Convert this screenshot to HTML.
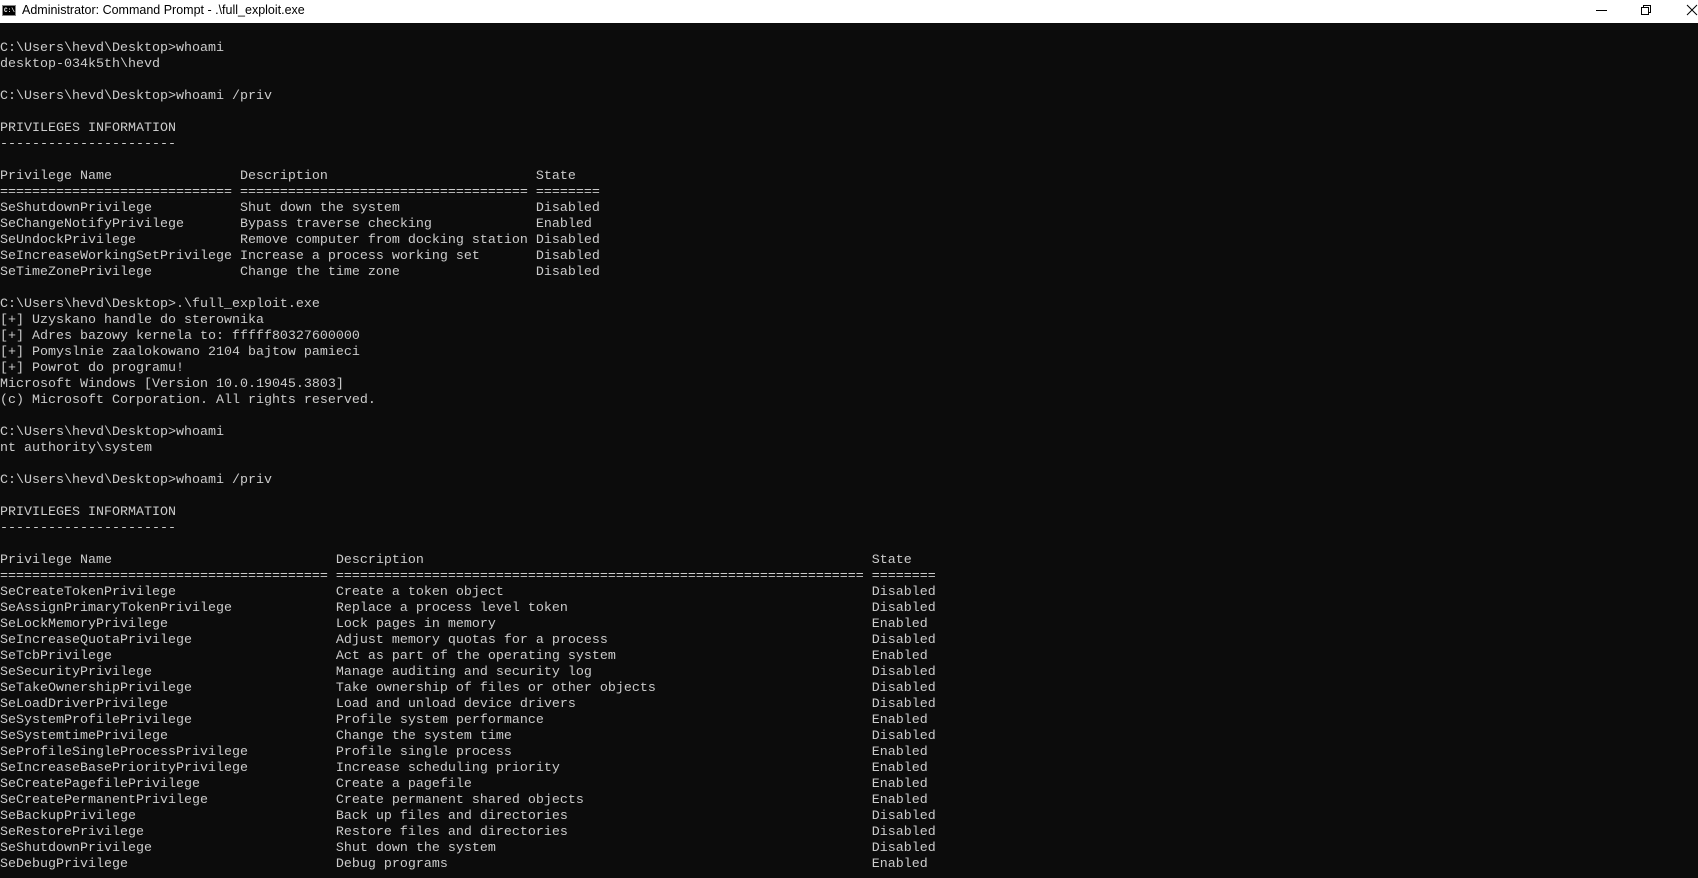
<!DOCTYPE html>
<html><head><meta charset="utf-8"><style>
html,body{margin:0;padding:0;width:1698px;height:878px;overflow:hidden;background:#0c0c0c}
.tb{position:absolute;left:0;top:0;width:1698px;height:23px;background:#fff}
.tt{position:absolute;left:22px;top:3px;font:12.5px "Liberation Sans",sans-serif;color:#000}
.ic{position:absolute;left:2px;top:5px;width:14px;height:11px;background:#000;border:1px solid #888;box-sizing:border-box}
.ic span{position:absolute;left:1px;top:1px;font:bold 6px "Liberation Mono",monospace;color:#fff;line-height:7px}
pre{position:absolute;left:0;top:41px;margin:0;font:13.33px/16px "Liberation Mono",monospace;color:#cccccc;white-space:pre}
</style></head><body>
<div class="tb">
<div class="ic"><span>C:\</span></div>
<div class="tt">Administrator: Command Prompt - .\full_exploit.exe</div>
<svg style="position:absolute;left:0;top:0" width="1698" height="23">
<line x1="1596" y1="10.5" x2="1607" y2="10.5" stroke="#000" stroke-width="1"/>
<rect x="1641.5" y="7.5" width="7" height="7" fill="none" stroke="#000"/>
<path d="M1643.5 7.5V5.5H1650.5V12.5H1648.5" fill="none" stroke="#000"/>
<path d="M1687 5L1697 15M1697 5L1687 15" stroke="#000"/>
</svg>
</div>
<pre>C:\Users\hevd\Desktop>whoami
desktop-034k5th\hevd

C:\Users\hevd\Desktop>whoami /priv

PRIVILEGES INFORMATION
----------------------

Privilege Name                Description                          State
============================= ==================================== ========
SeShutdownPrivilege           Shut down the system                 Disabled
SeChangeNotifyPrivilege       Bypass traverse checking             Enabled
SeUndockPrivilege             Remove computer from docking station Disabled
SeIncreaseWorkingSetPrivilege Increase a process working set       Disabled
SeTimeZonePrivilege           Change the time zone                 Disabled

C:\Users\hevd\Desktop>.\full_exploit.exe
[+] Uzyskano handle do sterownika
[+] Adres bazowy kernela to: fffff80327600000
[+] Pomyslnie zaalokowano 2104 bajtow pamieci
[+] Powrot do programu!
Microsoft Windows [Version 10.0.19045.3803]
(c) Microsoft Corporation. All rights reserved.

C:\Users\hevd\Desktop>whoami
nt authority\system

C:\Users\hevd\Desktop>whoami /priv

PRIVILEGES INFORMATION
----------------------

Privilege Name                            Description                                                        State
========================================= ================================================================== ========
SeCreateTokenPrivilege                    Create a token object                                              Disabled
SeAssignPrimaryTokenPrivilege             Replace a process level token                                      Disabled
SeLockMemoryPrivilege                     Lock pages in memory                                               Enabled
SeIncreaseQuotaPrivilege                  Adjust memory quotas for a process                                 Disabled
SeTcbPrivilege                            Act as part of the operating system                                Enabled
SeSecurityPrivilege                       Manage auditing and security log                                   Disabled
SeTakeOwnershipPrivilege                  Take ownership of files or other objects                           Disabled
SeLoadDriverPrivilege                     Load and unload device drivers                                     Disabled
SeSystemProfilePrivilege                  Profile system performance                                         Enabled
SeSystemtimePrivilege                     Change the system time                                             Disabled
SeProfileSingleProcessPrivilege           Profile single process                                             Enabled
SeIncreaseBasePriorityPrivilege           Increase scheduling priority                                       Enabled
SeCreatePagefilePrivilege                 Create a pagefile                                                  Enabled
SeCreatePermanentPrivilege                Create permanent shared objects                                    Enabled
SeBackupPrivilege                         Back up files and directories                                      Disabled
SeRestorePrivilege                        Restore files and directories                                      Disabled
SeShutdownPrivilege                       Shut down the system                                               Disabled
SeDebugPrivilege                          Debug programs                                                     Enabled</pre>
</body></html>
